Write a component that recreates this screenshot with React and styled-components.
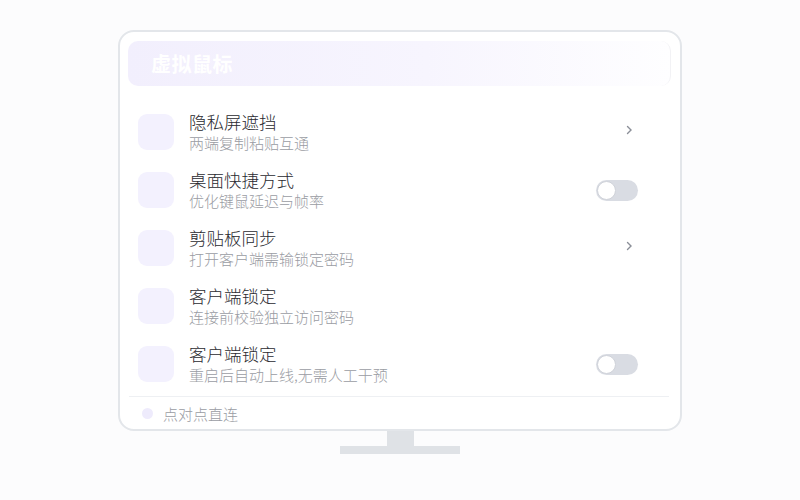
import styled, { createGlobalStyle } from "styled-components";

const GlobalStyle = createGlobalStyle`
  html, body {
    margin: 0;
    background: #fcfcfd;
    font-family: "Noto Sans CJK SC", "Noto Sans", sans-serif;
  }
`;

const Page = styled.div`
  width: 800px;
  height: 500px;
  display: flex;
  flex-direction: column;
  align-items: center;
  padding-top: 30px;
  box-sizing: border-box;
`;

const Monitor = styled.section`
  width: 564px;
  height: 401px;
  box-sizing: border-box;
  border: 2px solid #e3e6ea;
  border-radius: 16px;
  background: #ffffff;
  padding: 9px 9px 0 8px;
  display: flex;
  flex-direction: column;
`;

const Header = styled.header`
  height: 45px;
  border-radius: 10px;
  background: linear-gradient(90deg, #f2effd 0%, #f7f5fe 55%, #fefeff 100%);
  border-right: 1px solid #f2f2f5;
  display: flex;
  align-items: center;
  padding-left: 23px;
  color: #ffffff;
  font-size: 20px;
  font-weight: 700;
  letter-spacing: 0.5px;
`;

const List = styled.div`
  display: flex;
  flex-direction: column;
  gap: 18px;
  padding: 26px 33px 0 10px;
`;

const Row = styled.div`
  display: flex;
  align-items: center;
  height: 40px;
`;

const IconBox = styled.div`
  width: 36px;
  height: 36px;
  border-radius: 9px;
  background: #f3f1fe;
  flex-shrink: 0;
`;

const Texts = styled.div`
  flex: 1;
  margin-left: 15px;
  display: flex;
  flex-direction: column;
`;

const Title = styled.div`
  font-size: 17.5px;
  font-weight: 300;
  line-height: 20px;
  color: #2a2a30;
`;

const Sub = styled.div`
  margin-top: 1px;
  font-size: 15px;
  font-weight: 300;
  line-height: 19px;
  color: #9a9ca3;
`;

const Chevron = styled.svg`
  width: 8px;
  height: 10px;
  margin-right: 5px;
  margin-top: -4px;
`;

const Toggle = styled.div`
  width: 42px;
  height: 21px;
  border-radius: 11px;
  background: #d9dce3;
  position: relative;
  &::after {
    content: "";
    position: absolute;
    left: 1px;
    top: 1px;
    width: 17px;
    height: 17px;
    border-radius: 50%;
    background: #ffffff;
    border: 1px solid #cfd2d9;
  }
`;

const Divider = styled.div`
  height: 1px;
  background: #eef0f3;
  margin: 12px 2px 0 1px;
`;

const Footer = styled.div`
  display: flex;
  align-items: center;
  height: 32px;
  padding-left: 14px;
  font-size: 15px;
  font-weight: 300;
  color: #9a9ca3;
`;

const Dot = styled.span`
  width: 11px;
  height: 11px;
  border-radius: 50%;
  background: #eeebfc;
  margin-right: 10px;
`;

const Neck = styled.div`
  width: 27px;
  height: 15px;
  background: #dfe2e6;
`;

const Base = styled.div`
  width: 120px;
  height: 8px;
  background: #dfe2e6;
`;

const rows = [
  { title: "隐私屏遮挡", sub: "两端复制粘贴互通", ctrl: "arrow" },
  { title: "桌面快捷方式", sub: "优化键鼠延迟与帧率", ctrl: "toggle" },
  { title: "剪贴板同步", sub: "打开客户端需输锁定密码", ctrl: "arrow" },
  { title: "客户端锁定", sub: "连接前校验独立访问密码", ctrl: null },
  { title: "客户端锁定", sub: "重启后自动上线,无需人工干预", ctrl: "toggle" },
];

export default function App() {
  return (
    <>
      <GlobalStyle />
      <Page>
        <Monitor>
          <Header>虚拟鼠标</Header>
          <List>
            {rows.map((r, i) => (
              <Row key={i}>
                <IconBox />
                <Texts>
                  <Title>{r.title}</Title>
                  <Sub>{r.sub}</Sub>
                </Texts>
                {r.ctrl === "arrow" && (
                  <Chevron viewBox="0 0 8 10">
                    <path d="M2.5 1.5 L6 5 L2.5 8.5" fill="none" stroke="#8a8e97" strokeWidth="1.4" strokeLinecap="round" />
                  </Chevron>
                )}
                {r.ctrl === "toggle" && <Toggle />}
              </Row>
            ))}
          </List>
          <Divider />
          <Footer>
            <Dot />
            点对点直连
          </Footer>
        </Monitor>
        <Neck />
        <Base />
      </Page>
    </>
  );
}
